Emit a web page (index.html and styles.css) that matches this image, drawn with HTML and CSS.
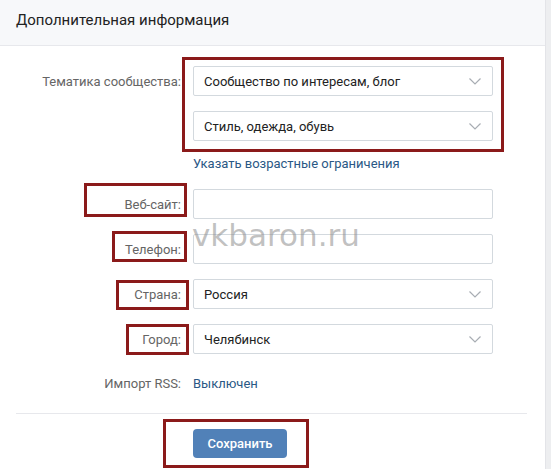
FILE: index.html
```html
<!DOCTYPE html>
<html lang="ru">
<head>
<meta charset="utf-8">
<link rel="stylesheet" href="styles.css">
</head>
<body>
<div class="card">
  <div class="header">Дополнительная информация</div>
  <div class="form">
    <div class="row">
      <div class="label">Тематика сообщества:</div>
      <div class="control select"><span>Сообщество по интересам, блог</span><svg class="chev" width="12" height="7" viewBox="0 0 12 7"><polyline points="0.5,0.5 6,6 11.5,0.5" fill="none" stroke="#a8adb3" stroke-width="1.2"/></svg></div>
    </div>
    <div class="row">
      <div class="label"></div>
      <div class="control select"><span>Стиль, одежда, обувь</span><svg class="chev" width="12" height="7" viewBox="0 0 12 7"><polyline points="0.5,0.5 6,6 11.5,0.5" fill="none" stroke="#a8adb3" stroke-width="1.2"/></svg></div>
    </div>
    <div class="row link-row">
      <div class="label"></div>
      <a class="link">Указать возрастные ограничения</a>
    </div>
    <div class="row">
      <div class="label">Веб-сайт:</div>
      <div class="control"></div>
    </div>
    <div class="row">
      <div class="label">Телефон:</div>
      <div class="control"></div>
    </div>
    <div class="row">
      <div class="label">Страна:</div>
      <div class="control select"><span>Россия</span><svg class="chev" width="12" height="7" viewBox="0 0 12 7"><polyline points="0.5,0.5 6,6 11.5,0.5" fill="none" stroke="#a8adb3" stroke-width="1.2"/></svg></div>
    </div>
    <div class="row">
      <div class="label">Город:</div>
      <div class="control select"><span>Челябинск</span><svg class="chev" width="12" height="7" viewBox="0 0 12 7"><polyline points="0.5,0.5 6,6 11.5,0.5" fill="none" stroke="#a8adb3" stroke-width="1.2"/></svg></div>
    </div>
    <div class="row rss-row">
      <div class="label">Импорт RSS:</div>
      <a class="link">Выключен</a>
    </div>
  </div>
  <div class="sep"></div>
  <div class="footer">
    <button class="btn">Сохранить</button>
  </div>

  <div class="watermark">vkbaron.ru</div>
  <div class="mark m1"></div>
  <div class="mark m2"></div>
  <div class="mark m3"></div>
  <div class="mark m4"></div>
  <div class="mark m5"></div>
  <div class="mark m6"></div>
</div>
</body>
</html>
```
FILE: styles.css
```css
html, body {
  margin: 0;
  padding: 0;
}
body {
  background: #edeef0;
  font-family: Roboto, "Open Sans", Arial, sans-serif;
  font-size: 13px;
  color: #222;
}
.card {
  position: relative;
  width: 545px;
  height: 469px;
  background: #fff;
  border-right: 1px solid #e3e4e8;
  overflow: hidden;
}
.header {
  height: 46px;
  box-sizing: border-box;
  padding: 11px 0 0 16px;
  background: #f7f8fa;
  border-bottom: 1px solid #e7e8ec;
  font-size: 15px;
  color: #222;
  line-height: 18px;
}
.form {
  padding-top: 20px;
}
.row {
  display: flex;
  align-items: center;
  height: 30px;
  margin-bottom: 15px;
}
.label {
  width: 181px;
  text-align: right;
  color: #656565;
  flex: none;
}
.control {
  margin-left: 12px;
  width: 300px;
  height: 30px;
  box-sizing: border-box;
  border: 1px solid #d3d9de;
  border-radius: 2px;
  background: #fff;
  display: flex;
  align-items: center;
  padding: 0 11px 0 10px;
}
.select span {
  flex: 1;
  color: #222;
}
.chev {
  display: block;
  margin-top: 1px;
}
.link {
  margin-left: 12px;
  color: #2a5885;
}
.link-row {
  height: 18px;
  margin-top: -2px;
  margin-bottom: 17px;
}
.rss-row {
  height: 18px;
  margin-top: 20px;
  margin-bottom: 0;
}
.sep {
  height: 1px;
  background: #e7e8ec;
  margin: 21px 18px 0 16px;
}
.footer {
  padding: 15px 0 0 193px;
}
.btn {
  display: block;
  width: 94px;
  height: 29px;
  border: none;
  border-radius: 4px;
  background: #5181b8;
  color: #fff;
  font-family: Roboto, Arial, sans-serif;
  font-size: 13px;
  font-weight: 500;
  padding: 0;
}
.watermark {
  position: absolute;
  left: 192px;
  top: 216px;
  font-family: "DejaVu Sans", sans-serif;
  font-size: 31px;
  line-height: 38px;
  color: rgba(140, 140, 140, 0.55);
  pointer-events: none;
}
.mark {
  position: absolute;
  box-sizing: border-box;
  border: 3px solid #8b1a1a;
}
.m1 { left: 182px; top: 57px; width: 322px; height: 95px; }
.m2 { left: 84px; top: 183px; width: 103px; height: 34px; }
.m3 { left: 112px; top: 231px; width: 75px; height: 31px; }
.m4 { left: 116px; top: 280px; width: 73px; height: 30px; }
.m5 { left: 126px; top: 324px; width: 63px; height: 31px; }
.m6 { left: 163px; top: 419px; width: 146px; height: 49px; }
```
